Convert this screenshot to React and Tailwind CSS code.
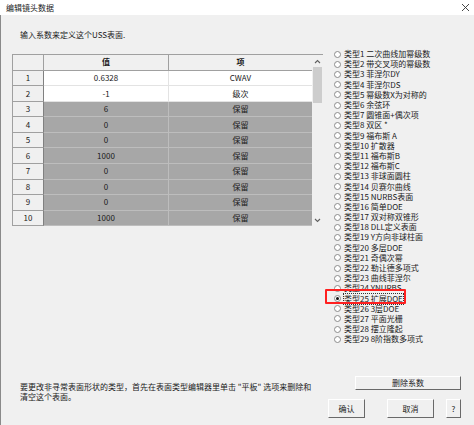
import React from 'react';

const font = { fontFamily: '"Noto Sans CJK SC", "Liberation Sans", sans-serif' };

const rows = [
  { n: 1, v: '0.6328', item: 'CWAV', fixed: false },
  { n: 2, v: '-1', item: '级次', fixed: false },
  { n: 3, v: '6', item: '保留', fixed: true },
  { n: 4, v: '0', item: '保留', fixed: true },
  { n: 5, v: '0', item: '保留', fixed: true },
  { n: 6, v: '1000', item: '保留', fixed: true },
  { n: 7, v: '0', item: '保留', fixed: true },
  { n: 8, v: '0', item: '保留', fixed: true },
  { n: 9, v: '0', item: '保留', fixed: true },
  { n: 10, v: '1000', item: '保留', fixed: true },
];

const types = [
  '类型1 二次曲线加幂级数',
  '类型2 带交叉项的幂级数',
  '类型3 菲涅尔DY',
  '类型4 菲涅尔DS',
  '类型5 幂级数X为对称的',
  '类型6 余弦环',
  '类型7 圆锥面+偶次项',
  '类型8 双区 *',
  '类型9 福布斯 A',
  '类型10 扩散器',
  '类型11 福布斯B',
  '类型12 福布斯C',
  '类型13 非球面圆柱',
  '类型14 贝赛尔曲线',
  '类型15 NURBS表面',
  '类型16 简单DOE',
  '类型17 双对称双锥形',
  '类型18 DLL定义表面',
  '类型19 Y方向非球柱面',
  '类型20 多层DOE',
  '类型21 奇偶次幂',
  '类型22 勒让德多项式',
  '类型23 曲线菲涅尔',
  '类型24 YNURBS',
  '类型25 扩展DOE',
  '类型26 3层DOE',
  '类型27 平面光栅',
  '类型28 摆立隆起',
  '类型29 8阶指数多项式',
];

const Chevron = ({ up }) => (
  <svg width="7" height="5" viewBox="0 0 7 5">
    <path d={up ? 'M1 4 L3.5 1.5 L6 4' : 'M1 1 L3.5 3.5 L6 1'} fill="none" stroke="#606060" strokeWidth="1.1" />
  </svg>
);

const Button = ({ children, className }) => (
  <button
    className={`h-full flex items-center justify-center bg-[#f0f0f0] border border-t-white border-l-white border-r-[#696969] border-b-[#696969] text-[8px] text-[#1a1a1a] ${className}`}
  >
    {children}
  </button>
);

const Radio = ({ label, checked }) => (
  <div className="relative h-[10.2px] flex items-center">
    <span className="w-[7px] h-[7px] rounded-full border border-[#8c8c8c] bg-white flex items-center justify-center shrink-0">
      {checked && <span className="w-[3px] h-[3px] rounded-full bg-[#111]" />}
    </span>
    <span className={`ml-[3px] text-[8px] leading-[10px] whitespace-nowrap text-[#1a1a1a] ${checked ? 'outline outline-1 outline-dotted outline-[#333]' : ''}`}>
      {label}
    </span>
    {checked && (
      <div className="absolute left-[-9px] top-[-5px] w-[81px] h-[15px] border-2 border-[#ff2020] rounded-[1px]" />
    )}
  </div>
);

export default function App() {
  return (
    <div style={font} className="w-[474px] h-[425px] overflow-hidden bg-[#f0f0f0] flex flex-col">
      <div className="h-[15px] bg-white flex items-center justify-between pl-[6px] pr-[4px] shrink-0">
        <span className="text-[8px] leading-[10px] text-[#1a1a1a]">编辑镜头数据</span>
        <svg width="9" height="9" viewBox="0 0 9 9">
          <path d="M1 1 L8 8 M8 1 L1 8" stroke="#333" strokeWidth="0.9" />
        </svg>
      </div>

      <div className="flex-1 border-l border-[#8a8a8a] flex flex-col">
        <div className="mt-[14px] pl-[19px] text-[8px] leading-[12px] text-[#1a1a1a]">
          输入系数来定义这个USS表面.
        </div>

        <div className="mt-[8px] flex">
          <div className="ml-[11px] mt-[5px] flex border-l border-t border-[#a0a0a0] h-[172px]">
            <div className="flex flex-col">
              <div className="grid grid-cols-[31px_125px_143px] h-[16px] bg-[#f0f0f0] text-[8px] text-[#1a1a1a]">
                <div className="border-r border-b border-[#a0a0a0]" />
                <div className="border-r border-b border-[#a0a0a0] flex items-center justify-center font-bold">值</div>
                <div className="border-b border-[#a0a0a0] flex items-center justify-center font-bold">项</div>
              </div>
              {rows.map((r) => (
                <div key={r.n} className="grid grid-cols-[31px_125px_143px] h-[15.6px] text-[8px] text-[#1a1a1a]">
                  <div className="bg-[#f0f0f0] border-r border-b border-r-[#808080] border-b-[#a0a0a0] flex items-center justify-center">
                    {r.n}
                  </div>
                  <div className={`flex items-center justify-center border-r border-b ${r.fixed ? 'bg-[#a7a7a7] border-[#bdbdbd]' : 'bg-white border-[#e3e3e3]'}`}>
                    {r.v}
                  </div>
                  <div className={`flex items-center justify-center border-b ${r.fixed ? 'bg-[#a7a7a7] border-[#bdbdbd]' : 'bg-white border-[#e3e3e3]'}`}>
                    {r.item}
                  </div>
                </div>
              ))}
            </div>
            <div className="w-[11px] bg-[#f0f0f0] flex flex-col items-center">
              <div className="h-[12px] flex items-center justify-center"><Chevron up /></div>
              <div className="w-[9px] h-[36px] bg-[#cdcdcd]" />
              <div className="flex-1" />
              <div className="h-[12px] flex items-center justify-center"><Chevron /></div>
            </div>
          </div>

          <div className="ml-[11px] flex flex-col">
            {types.map((t, i) => (
              <Radio key={t} label={t} checked={i === 24} />
            ))}
          </div>
        </div>

        <div className="mt-[32px] flex">
          <div className="pl-[19px] pt-[6px] w-[334px] text-[8px] leading-[10px] text-[#1a1a1a]">
            <div>要更改非寻常表面形状的类型，首先在表面类型编辑器里单击 "平板" 选项来删除和</div>
            <div>清空这个表面。</div>
          </div>
          <div className="flex-1 flex flex-col items-end pr-[13px]">
            <div className="h-[14px] w-[106px]">
              <Button className="w-full">删除系数</Button>
            </div>
            <div className="mt-[9px] h-[19px] flex">
              <Button className="w-[37px]">确认</Button>
              <Button className="w-[47px] ml-[22px]">取消</Button>
              <Button className="w-[15px] ml-[12px]">?</Button>
            </div>
          </div>
        </div>
      </div>
    </div>
  );
}
